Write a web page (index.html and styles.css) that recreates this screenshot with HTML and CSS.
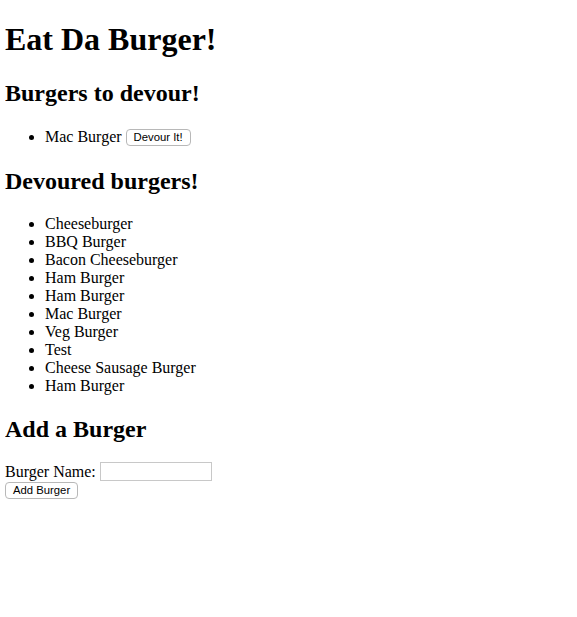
FILE: index.html
```html
<!DOCTYPE html>
<html>
<head>
<meta charset="utf-8">
<title>Eat Da Burger!</title>
<link rel="stylesheet" href="styles.css">
</head>
<body class="page">
<h1 class="title">Eat Da Burger!</h1>
<h2 class="section">Burgers to devour!</h2>
<ul class="list">
<li>Mac Burger <button class="btn">Devour It!</button></li>
</ul>
<h2 class="section section-mid">Devoured burgers!</h2>
<ul class="list">
<li>Cheeseburger</li>
<li>BBQ Burger</li>
<li>Bacon Cheeseburger</li>
<li>Ham Burger</li>
<li>Ham Burger</li>
<li>Mac Burger</li>
<li>Veg Burger</li>
<li>Test</li>
<li>Cheese Sausage Burger</li>
<li>Ham Burger</li>
</ul>
<h2 class="section section-last">Add a Burger</h2>
<form class="form">
<label class="label">Burger Name: <input class="field" type="text"></label><br>
<button class="btn" type="button">Add Burger</button>
</form>
</body>
</html>
```
FILE: styles.css
```css
html { background: #fff; }
.page {
  margin: 5px;
  font-family: "Liberation Serif", "Times New Roman", serif;
  font-size: 16px;
  line-height: 18px;
  color: #000;
}
.title {
  font-size: 32px;
  line-height: 37px;
  margin: 16px 0 21px;
}
.section {
  font-size: 24px;
  line-height: 28px;
  margin: 21px 0;
}
.section-mid {
  margin-bottom: 20px;
}
.section-last {
  margin: 20px 0 19px;
}
.list {
  margin: 16px 0;
  padding-left: 40px;
}
.form { margin: 0; }
.btn {
  font-family: "Liberation Sans", Arial, sans-serif;
  font-size: 11.3px;
  line-height: 13px;
  padding: 1px 7px;
  background: #fff;
  border: 1px solid #b8b8b8;
  border-radius: 4px;
  color: #000;
  height: 17px;
  vertical-align: 1px;
}
.field {
  width: 108px;
  height: 15px;
  padding: 1px;
  border: 1px solid #c8c8c8;
  font-size: 13px;
  vertical-align: 1px;
}
```
